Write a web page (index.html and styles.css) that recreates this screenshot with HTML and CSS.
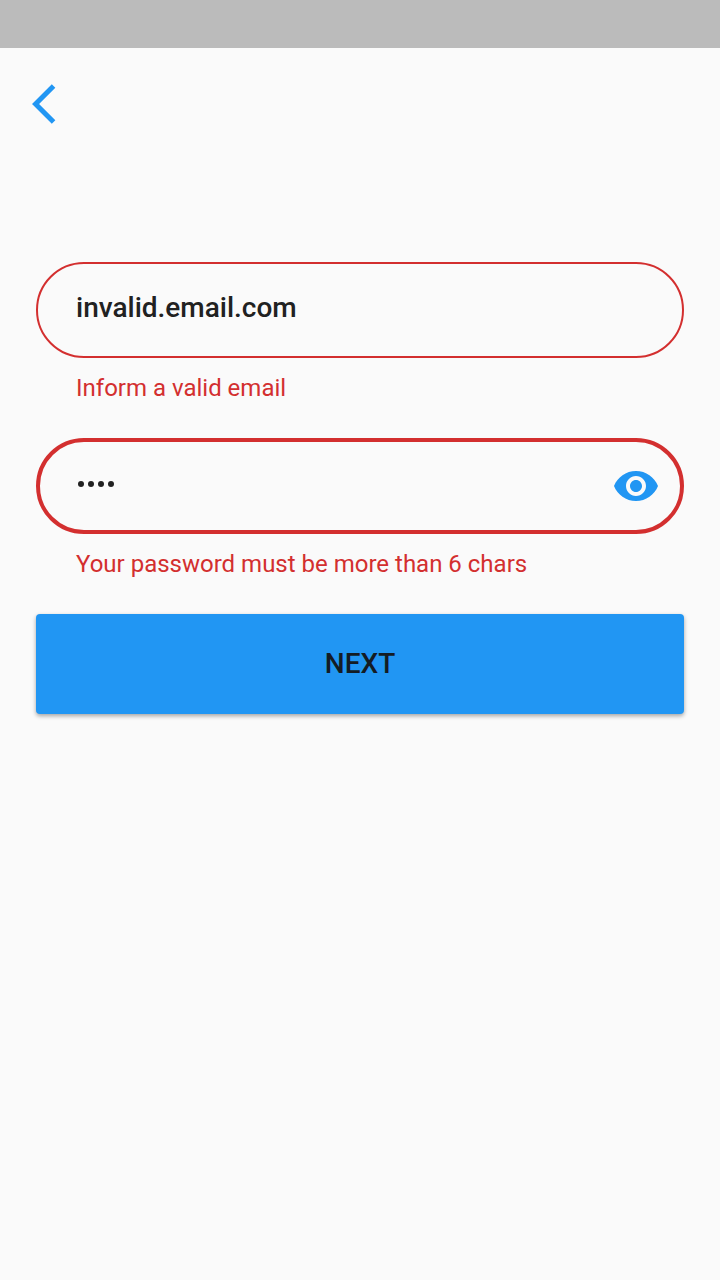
FILE: index.html
```html
<!DOCTYPE html>
<html lang="en">
<head>
<meta charset="utf-8">
<title>Sign in</title>
<link rel="stylesheet" href="styles.css">
</head>
<body>
<div class="status-bar"></div>
<header class="app-bar">
<svg class="back-icon" viewBox="0 0 24 24"><path d="M11.67 3.87L9.9 2.1 0 12l9.9 9.9 1.77-1.77L3.54 12z"/></svg>
</header>
<main class="form">
<div class="field"><span class="value">invalid.email.com</span></div>
<p class="error">Inform a valid email</p>
<div class="field focused">
<span class="dots"><i></i><i></i><i></i><i></i></span>
<svg class="eye-icon" viewBox="0 0 24 24"><path d="M12 4.5C7 4.5 2.73 7.61 1 12c1.73 4.39 6 7.5 11 7.5s9.27-3.11 11-7.5c-1.73-4.39-6-7.5-11-7.5zM12 17c-2.76 0-5-2.24-5-5s2.24-5 5-5 5 2.24 5 5-2.24 5-5 5zm0-8c-1.66 0-3 1.34-3 3s1.34 3 3 3 3-1.34 3-3-1.34-3-3-3z"/></svg>
</div>
<p class="error">Your password must be more than 6 chars</p>
<button class="next">NEXT</button>
</main>
</body>
</html>
```
FILE: styles.css
```css
* { box-sizing: border-box; }
body {
  margin: 0;
  min-height: 1280px;
  background: #fafafa;
  font-family: Roboto, sans-serif;
}
.status-bar { height: 48px; background: #bbb; }
.app-bar { height: 112px; padding: 32px; }
.back-icon { display: block; width: 48px; height: 48px; fill: #2196f3; }
.form { padding: 102px 36px 0; }
.field {
  display: flex;
  align-items: center;
  justify-content: space-between;
  height: 96px;
  padding: 0 22px 0 38px;
  border: 2px solid #d32f2f;
  border-radius: 48px;
}
.focused { padding: 0 20px 0 38px; border-width: 4px; }
.value {
  padding-bottom: 4px;
  color: #212121;
  font-size: 28px;
  font-weight: 500;
  line-height: 32px;
}
.dots { display: flex; gap: 4px; padding-bottom: 4px; }
.dots i { width: 6px; height: 6px; border-radius: 50%; background: #212121; }
.eye-icon { width: 48px; height: 48px; fill: #2196f3; }
.error {
  height: 28px;
  margin: 16px 40px 36px;
  color: #d32f2f;
  font-size: 24px;
  line-height: 28px;
}
.next {
  display: block;
  width: 100%;
  height: 100px;
  padding: 0;
  border: 0;
  border-radius: 4px;
  background: #2196f3;
  box-shadow: 0 2px 4px rgba(0, 0, 0, .35);
  color: #141c24;
  font: 500 28px/32px Roboto, sans-serif;
}
```
